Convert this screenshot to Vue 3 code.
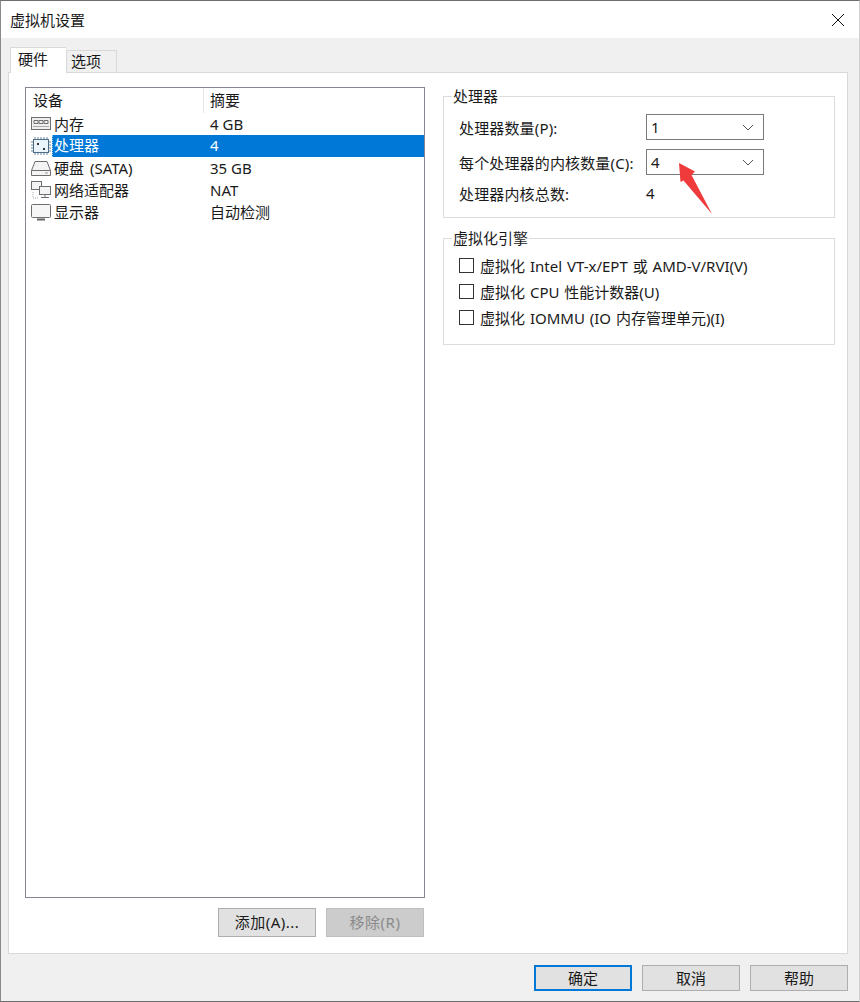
<template>
  <div class="dialog">
    <div class="titlebar">
      <span class="title">虚拟机设置</span>
      <svg class="close-icon" width="14" height="14" viewBox="0 0 14 14">
        <path d="M1 1L13 13M13 1L1 13" stroke="#111" stroke-width="1" fill="none" />
      </svg>
    </div>

    <div class="body">
      <div class="tabs">
        <div class="tab active">硬件</div>
        <div class="tab">选项</div>
      </div>

      <div class="pane">
        <div class="left-col">
          <div class="device-list">
            <div class="list-head">
              <div class="head-cell device-cell">设备</div>
              <div class="head-cell">摘要</div>
            </div>
            <div
              v-for="row in devices"
              :key="row.name"
              class="list-row"
              :class="{ selected: row.selected }"
            >
              <svg class="row-icon" width="22" height="20" viewBox="0 0 22 20">
                <g v-if="row.icon === 'memory'" fill="none" stroke="#6e6e6e">
                  <rect x="1.500" y="3.500" width="19" height="12" fill="#eee" />
                  <path d="M4 6.500h4v3H4zM9 6.500h4v3H9zM14 6.500h4v3h-4z" />
                  <path d="M3 12.500h16" stroke="#aaa" />
                </g>
                <g v-else-if="row.icon === 'cpu'" fill="none">
                  <path
                    d="M5 1v2M8 1v2M11 1v2M14 1v2M17 1v2M5 17v2M8 17v2M11 17v2M14 17v2M17 17v2M1 6h2M1 9h2M1 12h2M1 15h2M19 6h2M19 9h2M19 12h2M19 15h2"
                    stroke="#6a86a0"
                  />
                  <rect x="3.500" y="3.500" width="15" height="13" fill="#eaf4fb" stroke="#4d6c88" />
                  <rect x="7" y="7" width="2" height="2" fill="#333" />
                  <rect x="13" y="12" width="2" height="2" fill="#333" />
                </g>
                <g v-else-if="row.icon === 'disk'" fill="none" stroke="#6e6e6e">
                  <path d="M5 3.500h12l3.500 9v5h-19v-5z" fill="#f4f4f4" />
                  <path d="M1.500 12.500h19" />
                  <path d="M15 15h3" stroke="#999" />
                </g>
                <g v-else-if="row.icon === 'network'" fill="none" stroke="#6e6e6e">
                  <rect x="1.500" y="1.500" width="10" height="8" fill="#f4f4f4" />
                  <rect x="9.500" y="6.500" width="11" height="8" fill="#f4f4f4" />
                  <path d="M15 15v2M11 17.500h8" />
                  <path d="M3 12v6h5" stroke="#aaa" stroke-dasharray="1 1" />
                </g>
                <g v-else fill="none" stroke="#6e6e6e">
                  <rect x="1.500" y="2.500" width="19" height="13" rx="1" fill="#f6f6f6" />
                  <path d="M7 17.500h8" stroke="#666" stroke-width="2" />
                </g>
              </svg>
              <span class="row-name">{{ row.name }}</span>
              <span class="row-value">{{ row.value }}</span>
            </div>
          </div>
          <div class="list-actions">
            <button class="btn">添加(A)...</button>
            <button class="btn disabled">移除(R)</button>
          </div>
        </div>

        <div class="right-col">
          <div class="group cpu-group">
            <div class="group-title">处理器</div>
            <div class="form-row">
              <span class="form-label">处理器数量(P):</span>
              <div class="combo">
                <span>1</span>
                <svg width="12" height="7" viewBox="0 0 12 7">
                  <path d="M1 1l5 5 5-5" stroke="#555" fill="none" />
                </svg>
              </div>
            </div>
            <div class="form-row">
              <span class="form-label">每个处理器的内核数量(C):</span>
              <div class="combo">
                <span>4</span>
                <svg width="12" height="7" viewBox="0 0 12 7">
                  <path d="M1 1l5 5 5-5" stroke="#555" fill="none" />
                </svg>
              </div>
            </div>
            <div class="form-row total-row">
              <span class="form-label">处理器内核总数:</span>
              <span class="total-value">4</span>
            </div>
          </div>

          <div class="group virt-group">
            <div class="group-title">虚拟化引擎</div>
            <div class="check-list">
              <div v-for="opt in options" :key="opt" class="check-row">
                <span class="checkbox"></span>
                <span>{{ opt }}</span>
              </div>
            </div>
          </div>
        </div>
      </div>

      <div class="dialog-actions">
        <button class="btn default">确定</button>
        <button class="btn">取消</button>
        <button class="btn">帮助</button>
      </div>
    </div>

    <svg class="arrow" width="40" height="56" viewBox="0 0 40 56">
      <path d="M2 1L18 9.500L14.500 13L35 52L6.500 18.500L3.500 20z" fill="#ef3b3b" />
    </svg>
  </div>
</template>

<script setup>
const devices = [
  { name: "内存", value: "4 GB", icon: "memory" },
  { name: "处理器", value: "4", icon: "cpu", selected: true },
  { name: "硬盘 (SATA)", value: "35 GB", icon: "disk" },
  { name: "网络适配器", value: "NAT", icon: "network" },
  { name: "显示器", value: "自动检测", icon: "display" },
];

const options = [
  "虚拟化 Intel VT-x/EPT 或 AMD-V/RVI(V)",
  "虚拟化 CPU 性能计数器(U)",
  "虚拟化 IOMMU (IO 内存管理单元)(I)",
];
</script>

<style>
html,
body {
  margin: 0;
  background: #f0f0f0;
}
</style>

<style scoped>
.dialog {
  position: relative;
  width: 860px;
  height: 1002px;
  box-sizing: border-box;
  border-top: 1px solid #6e6e6e;
  border-bottom: 1px solid #6e6e6e;
  border-left: 1px solid #8a8a8a;
  border-right: 1px solid #d0d0d0;
  background: #f0f0f0;
  display: flex;
  flex-direction: column;
  font-family: "Noto Sans", "Noto Sans CJK SC", sans-serif;
  font-size: 15px;
  color: #1a1a1a;
}

.titlebar {
  height: 37px;
  flex: none;
  background: #fff;
  display: flex;
  align-items: center;
  justify-content: space-between;
  padding: 0 14px 0 9px;
}

.title {
  font-size: 15px;
}

.body {
  flex: 1;
  display: flex;
  flex-direction: column;
  padding: 0 11px 0 7px;
}

.tabs {
  height: 34px;
  flex: none;
  display: flex;
  align-items: flex-end;
  padding-left: 2px;
}

.tab {
  box-sizing: border-box;
  width: 51px;
  height: 22px;
  line-height: 20px;
  padding-left: 4px;
  background: #f0f0f0;
  border: 1px solid #d9d9d9;
  border-bottom: none;
}

.tab.active {
  width: 56px;
  height: 26px;
  line-height: 22px;
  padding-left: 7px;
  background: #fff;
  border-right: none;
  margin-bottom: -1px;
  position: relative;
  z-index: 1;
}

.pane {
  box-sizing: border-box;
  height: 882px;
  flex: none;
  background: #fff;
  border: 1px solid #d9d9d9;
  padding: 14px 12px 0 16px;
  display: flex;
  gap: 18px;
}

.left-col {
  width: 400px;
  flex: none;
}

.device-list {
  box-sizing: border-box;
  height: 811px;
  border: 1px solid #828790;
  background: #fff;
}

.list-head {
  display: flex;
  height: 25px;
}

.head-cell {
  padding-left: 6px;
  line-height: 25px;
}

.device-cell {
  width: 170px;
  padding-left: 7px;
  border-right: 1px solid #e5e5e5;
}

.list-row {
  display: flex;
  align-items: center;
  height: 22px;
  line-height: 21px;
}

.row-icon {
  flex: none;
  margin-left: 4px;
}

.row-name {
  box-sizing: border-box;
  width: 158px;
  flex: none;
  padding-left: 2px;
  word-spacing: 2px;
}

.list-row.selected .row-name,
.list-row.selected .row-value {
  background: #0078d7;
  color: #fff;
  height: 22px;
}

.list-row.selected .row-name {
  border-left: 1px dotted #9cc9ee;
  padding-left: 1px;
}

.list-row.selected .row-value {
  flex: 1;
}

.list-actions {
  display: flex;
  justify-content: flex-end;
  gap: 10px;
  margin-top: 10px;
  margin-right: 1px;
}

.btn {
  box-sizing: border-box;
  width: 98px;
  height: 29px;
  background: #e1e1e1;
  border: 1px solid #adadad;
  font-family: inherit;
  font-size: 15px;
  color: #1a1a1a;
  padding: 0 0 3px;
}

.list-actions .btn {
  letter-spacing: 0.5px;
}

.btn.disabled {
  background: #cccccc;
  border-color: #bfbfbf;
  color: #8a8a8a;
}

.dialog-actions {
  display: flex;
  justify-content: flex-end;
  gap: 10px;
  margin-top: 11px;
}

.dialog-actions .btn {
  height: 26px;
  padding-bottom: 2px;
}

.dialog-actions .btn.default {
  border: 2px solid #0078d7;
}

.right-col {
  width: 392px;
  flex: none;
  padding-top: 9px;
  display: flex;
  flex-direction: column;
  gap: 20px;
}

.group {
  box-sizing: border-box;
  border: 1px solid #dcdcdc;
  padding: 0 0 0 15px;
  display: flex;
  flex-direction: column;
}

.cpu-group {
  height: 122px;
}

.virt-group {
  height: 107px;
}

.group-title {
  align-self: flex-start;
  margin: -11px 0 0 -7px;
  padding: 0 1px;
  height: 20px;
  line-height: 20px;
  background: #fff;
}

.form-row {
  display: flex;
  align-items: center;
  height: 26px;
  margin-bottom: 9px;
}

.cpu-group .group-title {
  margin-bottom: 8px;
}

.form-label {
  width: 187px;
  flex: none;
  letter-spacing: 0.15px;
}

.combo {
  box-sizing: border-box;
  width: 118px;
  height: 26px;
  border: 1px solid #7a7a7a;
  display: flex;
  align-items: center;
  justify-content: space-between;
  padding: 0 9px 0 4px;
}

.total-row {
  margin-top: -4px;
}

.check-list {
  margin-top: 4px;
  word-spacing: 1px;
}

.check-row {
  display: flex;
  align-items: center;
  height: 26px;
}

.checkbox {
  box-sizing: border-box;
  width: 15px;
  height: 15px;
  border: 1px solid #333;
  margin-right: 6px;
  flex: none;
}

.arrow {
  position: absolute;
  left: 676px;
  top: 161px;
}
</style>
